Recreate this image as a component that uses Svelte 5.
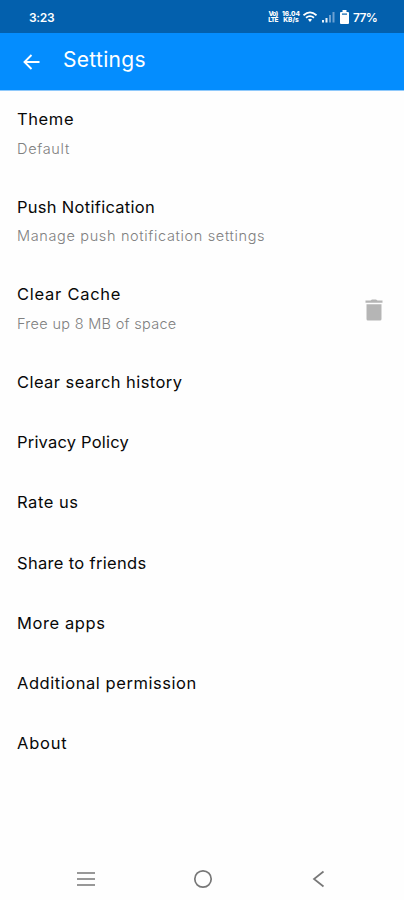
<script>
  const items = [
    { title: 'Theme', detail: 'Default', spacing: 0.6, detailSpacing: 0.7 },
    { title: 'Push Notification', detail: 'Manage push notification settings', spacing: 0.29, detailSpacing: 0.65 },
    { title: 'Clear Cache', detail: 'Free up 8 MB of space', icon: 'trash', spacing: 0.74, detailSpacing: 0.3 },
    { title: 'Clear search history', spacing: 0.43 },
    { title: 'Privacy Policy', spacing: 0.2 },
    { title: 'Rate us', spacing: 0.55 },
    { title: 'Share to friends', spacing: 0.32 },
    { title: 'More apps', spacing: 0.6 },
    { title: 'Additional permission', spacing: 0.55 },
    { title: 'About', spacing: 0.8 }
  ];
</script>

<div class="screen">
  <div class="status-bar">
    <span class="time">3:23</span>
    <div class="status-icons">
      <div class="volte"><span>Vo)</span><span>LTE</span></div>
      <div class="speed"><span>16.04</span><span>KB/s</span></div>
      <svg class="wifi" width="14" height="12" viewBox="0 0 14 12">
        <path d="M.5 4.200Q7-1.500 13.500 4.200M3 6.700Q7 3.500 11 6.700" fill="none" stroke="#fff" stroke-width="1.800" />
        <path d="M5 8.600Q7 6.800 9 8.600L7 11Z" fill="#fff" />
      </svg>
      <svg class="signal" width="13" height="12" viewBox="0 0 13 12">
        <path d="M0 9h2v2.500H0zM3.500 7h2v4.500h-2z" fill="#e8f1fa" />
        <path d="M7 4h2v7.500H7zM10.500 1h2v10.500h-2z" fill="#6ba0d2" />
      </svg>
      <svg class="battery" width="9" height="14" viewBox="0 0 9 14">
        <path d="M2.500 0h4v2H8q1 0 1 1v10q0 1-1 1H1q-1 0-1-1V3q0-1 1-1h1.500z" fill="#fff" />
        <path d="M2 3.500h5v1.200H2z" fill="#0360ad" />
      </svg>
      <span class="percent">77%</span>
    </div>
  </div>

  <header>
    <button class="back" aria-label="Back">
      <svg width="18" height="18" viewBox="0 0 18 18">
        <path d="M17.500 9H3M9.500 2L2.500 9l7 7" fill="none" stroke="#fff" stroke-width="1.900" />
      </svg>
    </button>
    <h1>Settings</h1>
  </header>

  <main>
    {#each items as item}
      <div class="row">
        <div class="label">
          <div class="title" style="letter-spacing: {item.spacing}px">{item.title}</div>
          {#if item.detail}
            <div class="detail" style="letter-spacing: {item.detailSpacing}px">{item.detail}</div>
          {/if}
        </div>
        {#if item.icon === 'trash'}
          <svg class="trash" width="18" height="22" viewBox="0 0 18 22">
            <path d="M.500 1.500h5L7 .5h4l1.500 1h5v2.300H.500zM1.500 5.200h15V20q0 1.500-1.500 1.500H3q-1.500 0-1.500-1.500z" fill="#b5b5b5" />
          </svg>
        {/if}
      </div>
    {/each}
  </main>

  <nav>
    <svg width="20" height="20" viewBox="0 0 20 20">
      <path d="M1 4h18M1 10h18M1 16h18" stroke="#777" stroke-width="1.700" />
    </svg>
    <svg width="20" height="20" viewBox="0 0 20 20">
      <circle cx="10" cy="10" r="8.200" fill="none" stroke="#777" stroke-width="1.700" />
    </svg>
    <svg width="20" height="20" viewBox="0 0 20 20">
      <path d="M14.500 2.500L5 10l9.500 7.500" fill="none" stroke="#777" stroke-width="1.700" />
    </svg>
  </nav>
</div>

<style>
  :global(body) {
    margin: 0;
    background: #fefefe;
  }

  .screen {
    display: flex;
    flex-direction: column;
    height: 900px;
    overflow: hidden;
    background: #fefefe;
    color: #080808;
    font-family: Inter, 'Open Sans', sans-serif;
  }

  .status-bar {
    display: flex;
    align-items: center;
    justify-content: space-between;
    box-sizing: border-box;
    height: 33px;
    padding: 1px 27px 0 29px;
    background: #0360ad;
    color: #fff;
  }

  .time {
    font-size: 12px;
    font-weight: 600;
    letter-spacing: -0.3px;
  }

  .status-icons {
    display: flex;
    align-items: center;
  }

  .volte,
  .speed {
    display: flex;
    flex-direction: column;
    align-items: center;
    font-size: 6.5px;
    font-weight: 800;
    line-height: 6.5px;
  }

  .volte {
    width: 12px;
    letter-spacing: -0.6px;
  }

  .speed {
    width: 18px;
    margin-left: 3px;
  }

  .wifi {
    margin-left: 3px;
  }

  .signal {
    margin-left: 5px;
  }

  .battery {
    margin-left: 5px;
  }

  .percent {
    width: 24px;
    margin-left: 4px;
    font-size: 12px;
    font-weight: 600;
    letter-spacing: -0.7px;
  }

  header {
    display: flex;
    align-items: center;
    height: 57px;
    background: #048dfe;
    border-bottom: 1px solid #8fc9fb;
  }

  .back {
    display: flex;
    padding: 0;
    margin: 0 23px 0 22px;
    border: none;
    background: none;
  }

  h1 {
    margin: 0;
    padding-bottom: 3px;
    color: #fff;
    font-size: 21px;
    font-weight: 400;
    letter-spacing: 0.3px;
    line-height: 28px;
  }

  main {
    flex: 1;
  }

  .row {
    display: flex;
    align-items: center;
    justify-content: space-between;
    padding: 16px 21px 20.200px 17px;
  }

  .title {
    font-size: 16.5px;
    line-height: 24px;
    white-space: nowrap;
  }

  .trash {
    margin-top: 4px;
  }

  .detail {
    padding-top: 7.500px;
    color: #808080;
    font-size: 14.5px;
    font-weight: 300;
    line-height: 20px;
    white-space: nowrap;
  }

  nav {
    display: flex;
    justify-content: space-between;
    padding: 0 75px 11px 76px;
  }
</style>
